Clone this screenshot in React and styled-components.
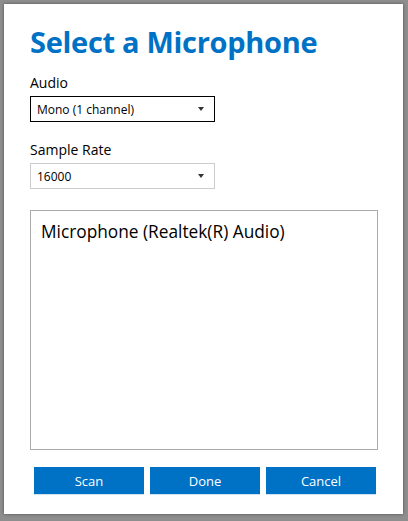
import React from "react";
import styled, { createGlobalStyle } from "styled-components";

const GlobalStyle = createGlobalStyle`
  html, body {
    margin: 0;
    padding: 0;
    background: #8e8e8e;
  }
  body {
    width: 408px;
    height: 521px;
    overflow: hidden;
    font-family: "Open Sans", "Noto Sans", sans-serif;
  }
`;

const Window = styled.div`
  margin: 4px 5px 0 4px;
  width: 399px;
  height: 510px;
  background: #ffffff;
  box-shadow: 0 0 3px rgba(0, 0, 0, 0.45);
  box-sizing: border-box;
  padding: 18px 26px 0 26px;
  display: flex;
  flex-direction: column;
`;

const Title = styled.h1`
  margin: 0;
  font-size: 29px;
  font-weight: 700;
  color: #0072c6;
  line-height: 40px;
  letter-spacing: -0.3px;
`;

const Label = styled.div`
  font-size: 14px;
  color: #000;
  line-height: 20px;
  margin-top: ${(p) => p.top || 0}px;
`;

const Select = styled.div`
  margin-top: 3px;
  width: 185px;
  height: 26px;
  box-sizing: border-box;
  border: 1px solid ${(p) => (p.focused ? "#000000" : "#cccccc")};
  display: flex;
  align-items: center;
  justify-content: space-between;
  padding: 0 10px 0 6px;
  font-size: 12px;
  color: #000;
`;

const Arrow = styled.span`
  width: 0;
  height: 0;
  border-left: 3px solid transparent;
  border-right: 3px solid transparent;
  border-top: 4px solid #333;
`;

const ListBox = styled.div`
  margin-top: 21px;
  width: 348px;
  height: 240px;
  box-sizing: border-box;
  border: 1px solid #aaaaaa;
  padding: 8px 10px;
`;

const ListItem = styled.div`
  font-size: 17.3px;
  line-height: 26px;
  color: #000;
`;

const ButtonRow = styled.div`
  margin-top: 17px;
  padding-left: 4px;
  display: flex;
  gap: 6px;
`;

const Button = styled.button`
  width: 110px;
  height: 28px;
  border: none;
  border-bottom: 1px solid #cfe3f5;
  background: #0072c6;
  color: #fff;
  font-family: "Open Sans", "Noto Sans", sans-serif;
  font-size: 13px;
  padding: 0;
`;

export default function App() {
  return (
    <>
      <GlobalStyle />
      <Window>
        <Title>Select a Microphone</Title>
        <Label top={11}>Audio</Label>
        <Select focused>
          <span>Mono (1 channel)</span>
          <Arrow />
        </Select>
        <Label top={18}>Sample Rate</Label>
        <Select>
          <span>16000</span>
          <Arrow />
        </Select>
        <ListBox>
          <ListItem>Microphone (Realtek(R) Audio)</ListItem>
        </ListBox>
        <ButtonRow>
          <Button>Scan</Button>
          <Button>Done</Button>
          <Button>Cancel</Button>
        </ButtonRow>
      </Window>
    </>
  );
}
